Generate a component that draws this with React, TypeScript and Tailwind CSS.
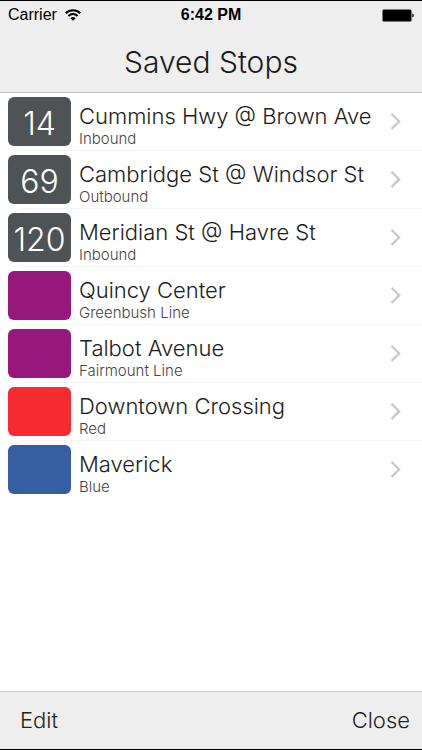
type Stop = {
  name: string;
  detail: string;
  route?: string;
  color: string;
};

const STOPS: Stop[] = [
  { name: 'Cummins Hwy @ Brown Ave', detail: 'Inbound', route: '14', color: 'bg-[#4e5356]' },
  { name: 'Cambridge St @ Windsor St', detail: 'Outbound', route: '69', color: 'bg-[#4e5356]' },
  { name: 'Meridian St @ Havre St', detail: 'Inbound', route: '120', color: 'bg-[#4e5356]' },
  { name: 'Quincy Center', detail: 'Greenbush Line', color: 'bg-[#98177d]' },
  { name: 'Talbot Avenue', detail: 'Fairmount Line', color: 'bg-[#98177d]' },
  { name: 'Downtown Crossing', detail: 'Red', color: 'bg-[#f52b31]' },
  { name: 'Maverick', detail: 'Blue', color: 'bg-[#365fa3]' },
];

function WifiIcon() {
  return (
    <svg viewBox="0 0 16 12" className="h-3 w-4" fill="none" stroke="#000" strokeWidth="2" aria-hidden="true">
      <path d="M0.8 4.2a10.2 10.2 0 0 1 14.4 0" />
      <path d="M3.4 7a6.5 6.5 0 0 1 9.2 0" />
      <path d="M8 11.8 5.4 9.3a3.6 3.6 0 0 1 5.2 0Z" fill="#000" stroke="none" />
    </svg>
  );
}

function BatteryIcon() {
  return (
    <svg viewBox="0 0 32 13" className="h-[13px] w-8" aria-hidden="true">
      <rect x="0.5" y="0.5" width="29" height="12" rx="1.5" fill="#000" stroke="#777" strokeWidth="0.6" />
      <path d="M30.4 4.5c1.8 0.5 1.8 3.5 0 4Z" fill="#000" />
    </svg>
  );
}

function StatusBar() {
  return (
    <div className="grid h-7 grid-cols-3 items-center px-2 font-['Liberation_Sans',Arial,sans-serif] text-base text-black">
      <div className="flex items-center gap-2">
        <span>Carrier</span>
        <WifiIcon />
      </div>
      <span className="text-center font-bold">6:42 PM</span>
      <div className="flex justify-end">
        <BatteryIcon />
      </div>
    </div>
  );
}

function StopRow({ stop }: { stop: Stop }) {
  return (
    <li className="group">
      <button type="button" className="flex w-full items-center gap-2 pr-5 pl-2 text-left">
        <span
          className={`my-1 flex h-[49px] w-[63px] shrink-0 items-center justify-center rounded-md pt-1 text-[32px] leading-9 text-white ${stop.color}`}
        >
          {stop.route}
        </span>
        <span className="min-w-0 flex-1 pt-1.5">
          <span className="block text-[22px] leading-7 whitespace-nowrap text-[#1c1c1c]">{stop.name}</span>
          <span className="block text-[15px] leading-[18px] text-[#444]">{stop.detail}</span>
        </span>
        <svg viewBox="0 0 12 18" className="h-[18px] w-3 shrink-0" fill="none" stroke="#c7c7cc" strokeWidth="2.2" aria-hidden="true">
          <path d="M1.5 0.8 9.2 8.4l-7.7 7.6" />
        </svg>
      </button>
      <div className="ml-5 h-px bg-[#f4f4f4] group-last:bg-transparent" />
    </li>
  );
}

export default function App() {
  return (
    <div className="flex min-h-screen flex-col border-y border-black bg-white font-[Inter,'Liberation_Sans',sans-serif] font-light">
      <header className="border-b border-[#bdbdbd] bg-[#eee]">
        <StatusBar />
        <h1 className="pt-[15px] pb-3 text-center text-[30px] leading-9 text-[#1c1c1c]">Saved Stops</h1>
      </header>

      <main className="flex-1">
        <ul>
          {STOPS.map(stop => (
            <StopRow key={stop.name} stop={stop} />
          ))}
        </ul>
      </main>

      <footer className="flex h-[58px] items-center justify-between border-t border-[#c8c8c8] bg-[#eee] pr-3 pl-5 text-[22px] text-[#222]">
        <button type="button">Edit</button>
        <button type="button">Close</button>
      </footer>
    </div>
  );
}
